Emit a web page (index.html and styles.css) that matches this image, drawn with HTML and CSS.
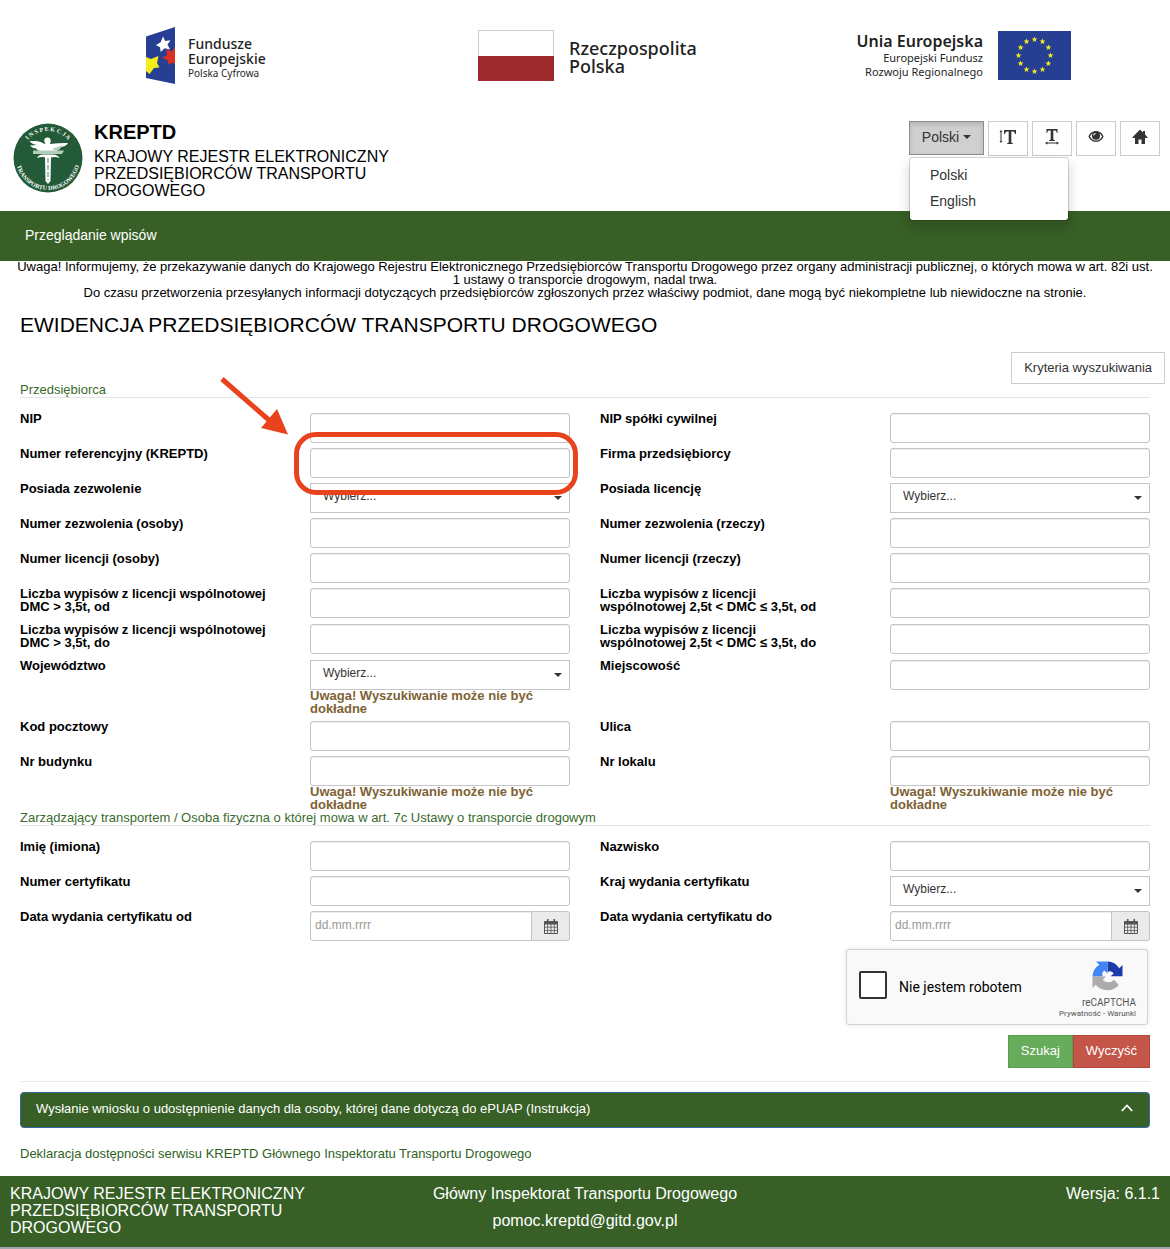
FILE: index.html
```html
<!DOCTYPE html>
<html lang="pl">
<head>
<meta charset="utf-8">
<title>KREPTD</title>
<meta name="viewport" content="width=device-width, initial-scale=1">
<link rel="stylesheet" href="styles.css">
</head>
<body>
<div class="funds">
  <div class="fund">
    <svg class="fund-fe" width="29" height="57" viewBox="0 0 29 57" aria-hidden="true">
      <path fill="#273f92" d="M0 9.500L29 0v57L0 51z"/>
      <path fill="#fff" d="M17 9.500l2.200 4.500 5.300-.8-3 4.300 2.500 5-5.300-1.200-4 3.700-.7-4.800-4-2.200 4.700-2.700z"/>
      <path fill="#f5ec1c" d="M0 30l5 2 7.500-3-1.500 7 2.500 4.500-5.500.5-4.500 6L0 44z"/>
      <path fill="#d93025" d="M29 20.500V37l-3-1.500L22.500 38l-1-5-5.500-2 5-3-.5-6 5 2.500z"/>
    </svg>
    <div class="fund-text fund-programme"><p class="fund-name">Fundusze<br>Europejskie</p><p class="fund-small">Polska Cyfrowa</p></div>
  </div>
  <div class="fund">
    <svg width="76" height="51" viewBox="0 0 76 51" aria-hidden="true">
      <rect x=".5" y=".5" width="75" height="50" fill="#fff" stroke="#ccc"/>
      <path fill="#9e2a2d" d="M0 26h76v25H0z"/>
    </svg>
    <p class="fund-text fund-state">Rzeczpospolita<br>Polska</p>
  </div>
  <div class="fund fund-eu">
    <div class="fund-text fund-right"><p class="fund-union">Unia Europejska</p><p>Europejski Fundusz<br>Rozwoju Regionalnego</p></div>
    <svg width="73" height="49" viewBox="0 0 73 49" aria-hidden="true">
      <defs><path id="star" fill="#f6ea2a" d="M0-3l.8 2h2.100L1.200.400l.7 2.100L0 1.300l-1.900 1.200.7-2.100L-2.900-1h2.100z"/></defs>
      <rect width="73" height="49" fill="#273f92"/>
      <use href="#star" x="36.500" y="8.500"/><use href="#star" x="44.500" y="10.600"/><use href="#star" x="50.400" y="16.500"/><use href="#star" x="52.500" y="24.500"/><use href="#star" x="50.400" y="32.500"/><use href="#star" x="44.500" y="38.400"/><use href="#star" x="36.500" y="40.500"/><use href="#star" x="28.500" y="38.400"/><use href="#star" x="22.600" y="32.500"/><use href="#star" x="20.500" y="24.500"/><use href="#star" x="22.600" y="16.500"/><use href="#star" x="28.500" y="10.600"/>
    </svg>
  </div>
</div>

<header class="header">
  <svg class="emblem" width="70" height="70" viewBox="0 0 70 70" role="img" aria-label="Inspekcja Transportu Drogowego">
    <circle cx="35" cy="35" r="34.500" fill="#235a37"/>
    <path id="arc-top" fill="none" d="M8 35a27 27 0 0 1 54 0"/>
    <path id="arc-bottom" fill="none" d="M3 35a32 32 0 0 0 64 0"/>
    <g class="emblem-text" text-anchor="middle">
      <text><textPath href="#arc-top" startOffset="50%">I N S P E K C J A</textPath></text>
      <text><textPath href="#arc-bottom" startOffset="50%">TRANSPORTU DROGOWEGO</textPath></text>
    </g>
    <path fill="#fff" d="M34.500 14.500a3.200 3.200 0 0 1 3.200 3.200c0 1.500-.4 2.300-.7 3.300l5-.5c4-.2 7-.5 13-.5-1 2.500-4 3.500-7 4-1.500 2.500-4 4-7 4.500h-12c-3-.5-5-1.500-6-3-3-.5-5-1.500-6-3 3 0 5-.5 7-.5-3-.5-6-1.500-7.500-4 6 0 11-.3 14 2.500l2 .5c-.3-1-1.200-1.500-1.200-3.300a3.200 3.200 0 0 1 3.200-3.200z"/>
    <path fill="#b5cbbb" d="M20 27.500h31l-2 3.500H20zM41 25l8-2.500-3 4.500h-6z"/>
    <path fill="#fff" d="M24 35c1-2 3-3.500 6-3.500h10c3 0 5.500 1.500 6.500 3.500-3-1-5-1.500-8.500-.5l-.5 23.500-2.500 3-2.500-3L32 34.500c-3-.8-5-.5-8 .5z"/>
    <path stroke="#235a37" stroke-width=".8" stroke-dasharray="5 2" d="M35 35v22"/>
  </svg>
  <div class="brand">
    <h1 class="brand-name">KREPTD</h1>
    <p class="brand-full">KRAJOWY REJESTR ELEKTRONICZNY PRZEDSIĘBIORCÓW TRANSPORTU DROGOWEGO</p>
  </div>
  <div class="tools">
    <div class="language">
      <button class="tool tool-language" type="button" aria-expanded="true">Polski <span class="caret"></span></button>
      <ul class="language-menu">
        <li><a href="#pl">Polski</a></li>
        <li><a href="#en">English</a></li>
      </ul>
    </div>
    <button class="tool" type="button" aria-label="Wysokość tekstu"><svg width="18" height="16" viewBox="0 0 18 16"><path fill="#333" d="M5 1h12v4h-1c-.2-1.600-.8-2.500-2-2.500h-1.700V13c0 1 .5 1.200 1.700 1.300V15H8v-.7c1.200-.1 1.700-.3 1.700-1.300V2.500H8C6.800 2.500 6.200 3.400 6 5H5zM2 1l1.500 2h-1v9h1L2 14 .5 12h1V3h-1z"/></svg></button>
    <button class="tool" type="button" aria-label="Szerokość tekstu"><svg width="16" height="16" viewBox="0 0 16 16"><path fill="#333" d="M2.500 0h11v4h-.8C12.500 2.400 12 1.600 11 1.600H9.300V10c0 .8.400 1 1.500 1.100v.9H5.200v-.9c1.100-.1 1.500-.3 1.500-1.100V1.600H5C4 1.600 3.500 2.400 3.300 4h-.8zM1 14l2.500-1.500v1h9v-1L15 14l-2.500 1.500v-1h-9v1z"/></svg></button>
    <button class="tool" type="button" aria-label="Kontrast"><svg width="16" height="16" viewBox="0 0 16 16"><path fill="#333" fill-rule="evenodd" d="M8 2c3.500 0 6.400 2.300 7.500 5.500-1.100 3.200-4 5.300-7.500 5.300S1.600 10.700.5 7.500C1.600 4.300 4.500 2 8 2zm-6 5.500c1.200 2.500 3.400 3.900 6 3.900s4.800-1.400 6-3.900c-.7-1.500-1.600-2.600-2.800-3.300.6.800.9 1.500.9 2.500a4.100 4.100 0 0 1-8.200 0c0-1 .3-1.700.9-2.500C3.600 4.900 2.700 6 2 7.500zM7.200 4c-1.200.2-2 1-2 2.300l1 .3c.1-1 .6-1.500 1.400-1.700z"/></svg></button>
    <button class="tool" type="button" aria-label="Strona główna"><svg width="16" height="16" viewBox="0 0 16 16"><path fill="#333" d="M8 .5l3 3V2h2v3.500l2.500 2.700c.3.400.2.800-.3.800H13v6H9.500v-4.500h-3V15H3V9H.8c-.5 0-.6-.4-.3-.8z"/></svg></button>
  </div>
</header>

<nav class="nav"><a href="#wpisy">Przeglądanie wpisów</a></nav>

<main class="main">
  <p class="notice">Uwaga! Informujemy, że przekazywanie danych do Krajowego Rejestru Elektronicznego Przedsiębiorców Transportu Drogowego przez organy administracji publicznej, o których mowa w art. 82i ust. 1 ustawy o transporcie drogowym, nadal trwa.<br>Do czasu przetworzenia przesyłanych informacji dotyczących przedsiębiorców zgłoszonych przez właściwy podmiot, dane mogą być niekompletne lub niewidoczne na stronie.</p>
  <h2 class="title">EWIDENCJA PRZEDSIĘBIORCÓW TRANSPORTU DROGOWEGO</h2>
  <div class="criteria"><button class="criteria-button" type="button">Kryteria wyszukiwania</button></div>

  <form>
    <fieldset class="group">
      <legend>Przedsiębiorca</legend>
      <div class="fields">
        <label for="nip">NIP</label>
        <div class="field"><input id="nip" type="text"></div>
        <label for="nip-sc">NIP spółki cywilnej</label>
        <div class="field"><input id="nip-sc" type="text"></div>

        <label for="ref">Numer referencyjny (KREPTD)</label>
        <div class="field marked">
          <input id="ref" type="text">
          <span class="mark"></span>
          <svg class="arrow" width="68" height="60" viewBox="0 0 68 60" aria-hidden="true"><path stroke="#e9431e" stroke-width="5" d="M2 3l48 42"/><path fill="#e9431e" d="M57 33l11 25.500L41 52z"/></svg>
        </div>
        <label for="firma">Firma przedsiębiorcy</label>
        <div class="field"><input id="firma" type="text"></div>

        <label for="zezw">Posiada zezwolenie</label>
        <div class="field select"><select id="zezw"><option>Wybierz...</option></select></div>
        <label for="lic">Posiada licencję</label>
        <div class="field select"><select id="lic"><option>Wybierz...</option></select></div>

        <label for="zezw-os">Numer zezwolenia (osoby)</label>
        <div class="field"><input id="zezw-os" type="text"></div>
        <label for="zezw-rz">Numer zezwolenia (rzeczy)</label>
        <div class="field"><input id="zezw-rz" type="text"></div>

        <label for="lic-os">Numer licencji (osoby)</label>
        <div class="field"><input id="lic-os" type="text"></div>
        <label for="lic-rz">Numer licencji (rzeczy)</label>
        <div class="field"><input id="lic-rz" type="text"></div>

        <label for="wyp-od">Liczba wypisów z licencji wspólnotowej<br>DMC &gt; 3,5t, od</label>
        <div class="field"><input id="wyp-od" type="text"></div>
        <label for="wyp2-od">Liczba wypisów z licencji<br>wspólnotowej 2,5t &lt; DMC ≤ 3,5t, od</label>
        <div class="field"><input id="wyp2-od" type="text"></div>

        <label for="wyp-do">Liczba wypisów z licencji wspólnotowej<br>DMC &gt; 3,5t, do</label>
        <div class="field"><input id="wyp-do" type="text"></div>
        <label for="wyp2-do">Liczba wypisów z licencji<br>wspólnotowej 2,5t &lt; DMC ≤ 3,5t, do</label>
        <div class="field"><input id="wyp2-do" type="text"></div>

        <label for="woj">Województwo</label>
        <div class="field">
          <div class="select"><select id="woj"><option>Wybierz...</option></select></div>
          <p class="warning">Uwaga! Wyszukiwanie może nie być dokładne</p>
        </div>
        <label for="miejsc">Miejscowość</label>
        <div class="field"><input id="miejsc" type="text"></div>

        <label for="kod">Kod pocztowy</label>
        <div class="field"><input id="kod" type="text"></div>
        <label for="ulica">Ulica</label>
        <div class="field"><input id="ulica" type="text"></div>

        <label for="budynek">Nr budynku</label>
        <div class="field">
          <input id="budynek" type="text">
          <p class="warning">Uwaga! Wyszukiwanie może nie być dokładne</p>
        </div>
        <label for="lokal">Nr lokalu</label>
        <div class="field">
          <input id="lokal" type="text">
          <p class="warning">Uwaga! Wyszukiwanie może nie być dokładne</p>
        </div>
      </div>
    </fieldset>

    <fieldset class="group">
      <legend>Zarządzający transportem / Osoba fizyczna o której mowa w art. 7c Ustawy o transporcie drogowym</legend>
      <div class="fields">
        <label for="imie">Imię (imiona)</label>
        <div class="field"><input id="imie" type="text"></div>
        <label for="nazwisko">Nazwisko</label>
        <div class="field"><input id="nazwisko" type="text"></div>

        <label for="cert">Numer certyfikatu</label>
        <div class="field"><input id="cert" type="text"></div>
        <label for="kraj">Kraj wydania certyfikatu</label>
        <div class="field select"><select id="kraj"><option>Wybierz...</option></select></div>

        <label for="data-od">Data wydania certyfikatu od</label>
        <div class="field date">
          <input id="data-od" type="text" placeholder="dd.mm.rrrr">
          <button type="button" aria-label="Kalendarz"><svg width="14" height="15" viewBox="0 0 14 15"><path fill="#555" fill-rule="evenodd" d="M3 0h1.500v2h5V0H11v2h2c.6 0 1 .4 1 1v11c0 .6-.4 1-1 1H1c-.6 0-1-.4-1-1V3c0-.6.4-1 1-1h2zM1 5.500v2.300h2.300V5.500zm3.100 0v2.300h2.500V5.500zm3.300 0v2.300h2.500V5.500zm3.300 0v2.300H13V5.500zM1 8.600v2.300h2.300V8.600zm3.100 0v2.300h2.500V8.600zm3.300 0v2.300h2.500V8.600zm3.300 0v2.300H13V8.600zM1 11.700V14h2.300v-2.300zm3.100 0V14h2.500v-2.300zm3.300 0V14h2.500v-2.300zm3.300 0V14H13v-2.300z"/></svg></button>
        </div>
        <label for="data-do">Data wydania certyfikatu do</label>
        <div class="field date">
          <input id="data-do" type="text" placeholder="dd.mm.rrrr">
          <button type="button" aria-label="Kalendarz"><svg width="14" height="15" viewBox="0 0 14 15"><path fill="#555" fill-rule="evenodd" d="M3 0h1.500v2h5V0H11v2h2c.6 0 1 .4 1 1v11c0 .6-.4 1-1 1H1c-.6 0-1-.4-1-1V3c0-.6.4-1 1-1h2zM1 5.500v2.300h2.300V5.500zm3.100 0v2.300h2.500V5.500zm3.300 0v2.300h2.500V5.500zm3.300 0v2.300H13V5.500zM1 8.600v2.300h2.300V8.600zm3.100 0v2.300h2.500V8.600zm3.300 0v2.300h2.500V8.600zm3.300 0v2.300H13V8.600zM1 11.700V14h2.300v-2.300zm3.100 0V14h2.500v-2.300zm3.300 0V14h2.500v-2.300zm3.300 0V14H13v-2.300z"/></svg></button>
        </div>
      </div>
    </fieldset>

    <div class="captcha">
      <input id="robot" type="checkbox">
      <label for="robot">Nie jestem robotem</label>
      <div class="captcha-brand">
        <svg width="31" height="31" viewBox="0 0 31 31" aria-hidden="true">
          <path fill="#1c3aa9" d="M30.500 15.300V4l-3.200 3.200A15 15 0 0 0 15.500.5v7.800l.3 3.400c.1-1 1-1.500 1.800-1.500 1.600 0 3 .7 4 2.300l-3 2.800z"/>
          <path fill="#4285f4" d="M15.500.5H4l3.200 3.200A15 15 0 0 0 .5 15.400h7.700l3.300-.1c-1-.4-1.300-1.300-1.300-2.100 0-1.400.8-2.800 2.200-3.800l3.100 3z"/>
          <path fill="#ababab" d="M.5 15.400V27l3.200-3.300a15 15 0 0 0 23.200.3l-5-5.200a7 7 0 0 1-5.500 2.500c-2.800 0-4.500-1-5.500-2.800l3.100-3.100z"/>
        </svg>
        <span class="captcha-name">reCAPTCHA</span>
        <span class="captcha-links"><a href="#privacy">Prywatność</a> - <a href="#terms">Warunki</a></span>
      </div>
    </div>

    <div class="actions">
      <button class="search" type="submit">Szukaj</button>
      <button class="clear" type="reset">Wyczyść</button>
    </div>
  </form>

  <hr class="rule">
  <button class="accordion" type="button">
    <span>Wysłanie wniosku o udostępnienie danych dla osoby, której dane dotyczą do ePUAP (Instrukcja)</span>
    <svg width="12" height="8" viewBox="0 0 12 8" aria-hidden="true"><path fill="none" stroke="#fff" stroke-width="1.800" d="M.8 7L6 1.500 11.200 7"/></svg>
  </button>
  <p class="declaration"><a href="#deklaracja">Deklaracja dostępności serwisu KREPTD Głównego Inspektoratu Transportu Drogowego</a></p>
</main>

<footer class="footer">
  <p class="footer-name">KRAJOWY REJESTR ELEKTRONICZNY PRZEDSIĘBIORCÓW TRANSPORTU DROGOWEGO</p>
  <div class="footer-contact">
    <p>Główny Inspektorat Transportu Drogowego</p>
    <p><a href="mailto:pomoc.kreptd@gitd.gov.pl">pomoc.kreptd@gitd.gov.pl</a></p>
  </div>
  <p class="footer-version">Wersja: 6.1.1</p>
</footer>
</body>
</html>
```
FILE: styles.css
```css
* { box-sizing: border-box; }
body {
  margin: 0;
  background: #fff;
  color: #000;
  font: 13px/13px "Liberation Sans", Helvetica, Arial, sans-serif;
}
p, h1, h2, ul { margin: 0; padding: 0; }
a { color: inherit; text-decoration: none; }
button, input, select { font: inherit; margin: 0; }
svg { display: block; flex: none; }

/* Funding logos */
.funds {
  display: grid;
  grid-template-columns: 332fr 378fr 215fr;
  padding: 27px 99px 0 146px;
  height: 84px;
}
.fund { display: flex; align-items: center; gap: 13px; color: #1f1f1f; font-family: "Noto Sans", sans-serif; white-space: nowrap; }
.fund-eu { justify-content: flex-end; gap: 15px; }
.fund-text { font-size: 11px; line-height: 14px; }
.fund-programme { padding-top: 4px; }
.fund-name { font-size: 14px; line-height: 15px; font-weight: 500; }
.fund-small { font-size: 10px; }
.fund-state { padding: 2px 0 0 2px; font-size: 18px; line-height: 18px; font-weight: 500; }
.fund-union { font-size: 16px; line-height: 20px; font-weight: 600; }
.fund-right { padding-bottom: 2px; text-align: right; }

/* Brand and tools */
.header { display: flex; align-items: flex-start; padding: 37px 10px 12px 13px; }
.emblem { margin-top: 2px; }
.emblem-text { fill: #fff; font: 700 6px "Liberation Serif", serif; }
.brand { width: 310px; margin-left: 11px; }
.brand-name { margin-bottom: 5px; font-size: 20px; line-height: 22px; }
.brand-full { font-size: 16px; line-height: 17px; }
.tools { display: flex; gap: 4px; margin-left: auto; }
.tool {
  display: flex;
  align-items: center;
  justify-content: center;
  width: 40px;
  height: 35px;
  padding: 0 0 4px;
  border: 1px solid #ccc;
  background: #fff;
  color: #333;
  font-size: 14px;
  line-height: 20px;
}
.tool-language {
  width: 75px;
  height: 34px;
  padding-bottom: 2px;
  gap: 4px;
  border-color: #8c8c8c;
  background: #d0d0d0;
  box-shadow: inset 0 3px 5px rgba(0, 0, 0, .125);
}
.caret { border: 4px solid transparent; border-top-color: #333; border-bottom: 0; }
.language { position: relative; }
.language-menu {
  position: absolute;
  top: 36px;
  left: 0;
  z-index: 2;
  width: 160px;
  padding: 4px 0 6px;
  border: 1px solid rgba(0, 0, 0, .15);
  border-radius: 4px;
  background: #fff;
  background-clip: padding-box;
  box-shadow: 0 6px 12px rgba(0, 0, 0, .175);
  color: #333;
  font-size: 14px;
  line-height: 20px;
  list-style: none;
}
.language-menu a { display: block; padding: 3px 20px; }

.nav { padding: 14px 25px 16px; background: #375f26; color: #fff; font-size: 14px; line-height: 20px; }

/* Content */
.main { padding: 0 20px; }
.notice { margin: -1px -5px 0; text-align: center; }
.title { margin-top: 14px; font-size: 21px; line-height: 24px; font-weight: 400; }
.criteria { display: flex; justify-content: flex-end; margin: 15px -15px 0 0; }
.criteria-button { height: 32px; padding: 0 12px 2px; border: 1px solid #ccc; background: #fff; color: #333; }

.group { min-width: 0; margin: 0; padding: 0; border: 0; }
.group legend {
  width: 100%;
  margin-bottom: 15px;
  padding: 0 0 2px;
  border-bottom: 1px solid #e5e5e5;
  color: #3a6b2c;
  line-height: 11px;
}
.fields { display: grid; grid-template-columns: repeat(4, minmax(0, 1fr)); align-items: start; gap: 5px 30px; }
.fields label { margin: -1px 0 6px; font-weight: 700; }
.field input, .field select {
  display: block;
  width: 100%;
  height: 30px;
  padding: 0 12px;
  border: 1px solid #c4c4c4;
  border-radius: 3px;
  background: #fff;
  box-shadow: inset 0 1px 1px rgba(0, 0, 0, .075);
  color: #333;
  font-size: 12px;
}
.select { position: relative; }
.select select { appearance: none; padding: 0 12px 4px; border-radius: 0; box-shadow: none; }
.select::after {
  content: "";
  position: absolute;
  top: 13px;
  right: 8px;
  border: 4px solid transparent;
  border-top-color: #333;
  border-bottom: 0;
  pointer-events: none;
}
.warning { margin: -1px 0 1px; color: #7d6233; font-weight: 700; }
.date { display: flex; }
.date input { flex: 1; width: auto; min-width: 0; padding: 0 4px 2px; border-radius: 3px 0 0 3px; }
.date input::placeholder { color: #999; opacity: 1; }
.date button {
  display: flex;
  align-items: center;
  justify-content: center;
  width: 38px;
  height: 30px;
  padding: 0;
  border: 1px solid #c4c4c4;
  border-left: 0;
  border-radius: 0 3px 3px 0;
  background: #eaeaea;
}

/* Highlight around the reference number */
.marked { position: relative; z-index: 1; }
.mark { position: absolute; inset: -16px -8px -17px -16px; border: 5px solid #e9431e; border-radius: 22px; pointer-events: none; }
.arrow { position: absolute; right: calc(100% + 22px); bottom: 42px; }

.captcha {
  display: flex;
  align-items: center;
  width: 302px;
  height: 76px;
  margin: 8px 2px 0 auto;
  padding: 0 11px 0 12px;
  border: 1px solid #d3d3d3;
  border-radius: 3px;
  background: #f9f9f9;
  box-shadow: 0 0 4px 1px rgba(0, 0, 0, .08);
  font-family: Roboto, sans-serif;
}
.captcha input { appearance: none; width: 28px; height: 28px; margin-bottom: 4px; border: 2px solid #333; border-radius: 2px; background: #fff; }
.captcha label { margin-left: 12px; font-size: 14px; line-height: 17px; }
.captcha-brand { display: flex; flex-direction: column; align-items: flex-end; margin-left: auto; padding-top: 6px; color: #555; }
.captcha-brand svg { margin-right: 13px; }
.captcha-name { margin-top: 5px; font-size: 10px; line-height: 12px; }
.captcha-links { font-size: 8px; line-height: 10px; }

.actions { display: flex; justify-content: flex-end; margin-top: 10px; }
.actions button { height: 33px; padding: 0 12px 2px; border: 1px solid; color: #fff; }
.actions .search { background: #67ac5b; border-color: #5a9e4e; }
.actions .clear { background: #c35549; border-color: #b8453a; }

.rule { margin: 13px 0 10px; border: 0; border-top: 1px solid #e8e8e8; }
.accordion {
  display: flex;
  align-items: center;
  justify-content: space-between;
  width: 100%;
  height: 36px;
  padding: 0 16px 4px 15px;
  border: 1px solid #33699f;
  border-radius: 4px;
  background: #375f26;
  color: #fff;
  text-align: left;
}
.declaration { margin: 19px 0 16px; color: #2f5f1e; }

.footer {
  display: grid;
  grid-template-columns: 1fr 1fr 1fr;
  padding: 9px 10px 11px;
  border-bottom: 2px solid #a3a7ad;
  background: #375f26;
  color: #fff;
  font-size: 16px;
  line-height: 17px;
}
.footer-name { max-width: 310px; }
.footer-contact { display: grid; align-content: start; gap: 10px; text-align: center; }
.footer-version { text-align: right; }
```
